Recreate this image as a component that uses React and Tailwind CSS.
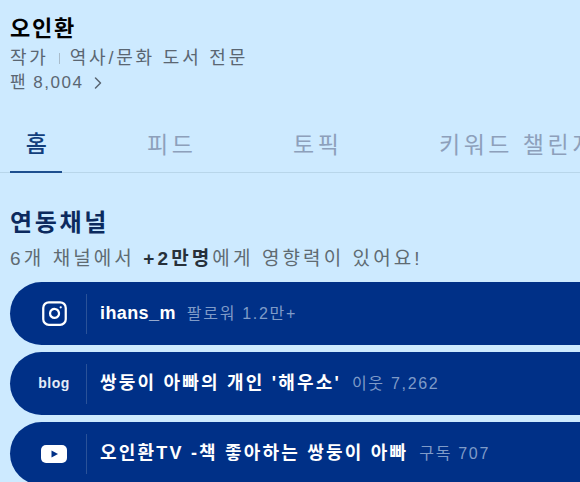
import { ChevronRight, Instagram } from 'lucide-react';

const font = { fontFamily: '"Liberation Sans", "Noto Sans CJK KR", sans-serif' };

const tabs = ['홈', '피드', '토픽', '키워드 챌린지'];

const channels = [
  { id: 'insta', name: 'ihans_m', meta: '팔로워 1.2만+', nameClass: 'tracking-[0.4px]' },
  { id: 'blog', name: "쌍둥이 아빠의 개인 '해우소'", meta: '이웃 7,262', nameClass: 'tracking-[2.2px]' },
  { id: 'youtube', name: '오인환TV -책 좋아하는 쌍둥이 아빠', meta: '구독 707', nameClass: 'tracking-[2.2px]' },
];

const ChannelIcon = ({ id }) => {
  if (id === 'insta') return <Instagram size={27} strokeWidth={2} className="text-white" />;
  if (id === 'blog') return <span className="text-[14px] font-bold tracking-[0.5px] text-[#e4ecf7]">blog</span>;
  return (
    <svg width="28" height="20" viewBox="0 0 28 20">
      <rect x="1" y="1" width="26" height="18" rx="5" fill="#fff" />
      <path d="M11.5 6.5 L18 10 L11.5 13.5 Z" fill="#003087" />
    </svg>
  );
};

export default function App() {
  return (
    <div className="h-[482px] w-[580px] overflow-hidden bg-[#cdeaff] pt-[14px]" style={font}>
      <div className="pl-[10px]">
        <h1 className="text-[22px] leading-[30px] font-bold tracking-[1.8px] text-black">오인환</h1>
        <p className="mt-[2px] flex h-[24px] items-center text-[18px] tracking-[2.8px] text-[#5a6672]">
          작가<span className="mx-[10px] h-[11px] w-px bg-[#a9bccb]" />역사/문화 도서 전문
        </p>
        <div className="flex h-[25px] items-center text-[17px] tracking-[1.5px] text-[#5a6672]">
          팬 8,004
          <ChevronRight size={20} strokeWidth={1.8} className="ml-[5px]" />
        </div>
      </div>

      <nav className="mt-[26px] flex h-[52px] gap-[85px] whitespace-nowrap border-b border-[#b8d6ea] pl-[10px]">
        {tabs.map((t, i) => (
          <div
            key={t}
            className={`flex h-[52px] items-center pb-[4px] text-[23px] tracking-[3.5px] ${
              i === 0
                ? 'w-[52px] justify-center border-b-2 border-[#1d4f8f] pl-[4px] font-medium text-[#123f7c]'
                : 'w-[61px] justify-start text-[#8da0bb]'
            }`}
          >
            {t}
          </div>
        ))}
      </nav>

      <section className="pl-[10px] pt-[34px]">
        <h2 className="text-[24px] leading-[32px] font-bold tracking-[2.7px] text-[#0c2a5e]">연동채널</h2>
        <p className="mt-[7px] text-[19px] leading-[26px] tracking-[3.1px] text-[#5f6b72]">
          6개 채널에서 <b className="font-bold text-[#26303a]">+2만명</b>에게 영향력이 있어요!
        </p>

        <div className="mt-[10px] flex flex-col gap-[7px]">
          {channels.map((c) => (
            <div key={c.id} className="flex h-[63px] w-[600px] shrink-0 items-center rounded-l-[32px] bg-[#003087]">
              <div className="flex w-[76px] justify-center pl-[13px] pr-[1px]">
                <ChannelIcon id={c.id} />
              </div>
              <div className="h-[40px] w-px bg-[#2a5299]" />
              <span className={`ml-[13px] text-[18px] font-bold text-white ${c.nameClass}`}>{c.name}</span>
              <span className="ml-[11px] text-[16px] tracking-[1.7px] text-[#7f9bc8]">{c.meta}</span>
            </div>
          ))}
        </div>
      </section>
    </div>
  );
}
